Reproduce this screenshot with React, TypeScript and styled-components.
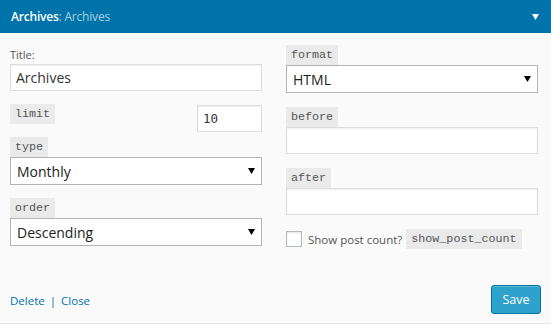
import React from "react"
import styled, { createGlobalStyle } from "styled-components"

const GlobalStyle = createGlobalStyle`
  html, body {
    margin: 0;
    padding: 0;
    background: #fff;
  }
  body {
    font-family: "Open Sans", "Liberation Sans", sans-serif;
  }
`

const Widget = styled.div`
  width: 551px;
  background: #fafafa;
  border-bottom: 2px solid #e5e5e5;
`

const Header = styled.div`
  height: 33px;
  background: #0073aa;
  padding: 0 12px 0 11px;
  display: flex;
  align-items: center;
  justify-content: space-between;
  box-sizing: border-box;
`

const HeaderTitle = styled.h3`
  margin: 0;
  font-size: 12px;
  font-weight: 600;
  color: #fff;
  letter-spacing: -0.2px;

  span {
    font-weight: 400;
    color: #a9cfe2;
  }
`

const Body = styled.div`
  padding: 0 10px;
  display: grid;
  grid-template-columns: 252px 252px;
  column-gap: 24px;
`

const Column = styled.div<{ $top: number }>`
  display: flex;
  flex-direction: column;
  padding-top: ${({ $top }) => $top}px;
`

const Field = styled.div<{ $gap?: number }>`
  display: flex;
  flex-direction: column;
  align-items: flex-start;
  margin-top: ${({ $gap = 0 }) => $gap}px;
`

const LabelText = styled.label`
  font-size: 11px;
  line-height: 18px;
  color: #555;
`

const Code = styled.code`
  font-family: "Liberation Mono", "DejaVu Sans Mono", monospace;
  font-size: 11.7px;
  line-height: 16px;
  padding: 2px 5px;
  background: #eaeaea;
  color: #555;
`

const TextInput = styled.div<{ $mono?: boolean; $width?: number }>`
  box-sizing: border-box;
  width: ${({ $width }) => ($width ? `${$width}px` : "100%")};
  height: 27px;
  border: 1px solid #ddd;
  background: #fff;
  box-shadow: inset 0 1px 2px rgba(0, 0, 0, 0.07);
  padding: 0 5px;
  display: flex;
  align-items: center;
  font-family: ${({ $mono }) =>
    $mono ? `"DejaVu Sans Mono", monospace` : `"Open Sans", sans-serif`};
  font-size: ${({ $mono }) => ($mono ? "12.5px" : "14px")};
  color: #333;
`

const Select = styled.div`
  box-sizing: border-box;
  width: 100%;
  height: 28px;
  border: 1px solid #b4b4b4;
  background: #fff;
  padding: 0 6px 0 6px;
  display: flex;
  align-items: center;
  justify-content: space-between;
  font-size: 14px;
  color: #222;
`

const LimitRow = styled.div`
  display: flex;
  justify-content: space-between;
  align-items: flex-start;
  margin-top: 13px;

  ${TextInput} {
    margin-top: 1px;
  }
`

const CheckRow = styled.div`
  display: flex;
  align-items: center;
  margin-top: 14px;
  height: 20px;
`

const Checkbox = styled.span`
  box-sizing: border-box;
  width: 16px;
  height: 16px;
  border: 1px solid #b4b9be;
  background: #fff;
  box-shadow: inset 0 1px 2px rgba(0, 0, 0, 0.1);
`

const CheckLabel = styled.span`
  font-size: 11.5px;
  color: #555;
  margin: 0 4px 0 6px;
`

const Footer = styled.div`
  display: flex;
  justify-content: space-between;
  align-items: center;
  padding: 36px 10px 9px;
`

const Links = styled.div`
  font-size: 11.5px;
  color: #0073aa;
  display: flex;
  gap: 5px;
  margin-top: 1px;
`

const Link = styled.a`
  color: #0073aa;
  text-decoration: none;
`

const SaveButton = styled.button`
  box-sizing: border-box;
  width: 50px;
  height: 29px;
  border: 1px solid #0074a2;
  border-radius: 3px;
  background: #2ea2cc;
  box-shadow: inset 0 1px 0 rgba(120, 200, 230, 0.5);
  color: #fff;
  font-family: "Open Sans", sans-serif;
  font-size: 12.5px;
  padding: 0;
`

const Arrow = ({ color = "#000" }: { color?: string }) => (
  <svg width="7" height="6" viewBox="0 0 7 6">
    <polygon points="0,0 7,0 3.5,6" fill={color} />
  </svg>
)

type SelectProps = { value: string }

const SelectBox = ({ value }: SelectProps) => (
  <Select>
    <span>{value}</span>
    <Arrow />
  </Select>
)

const App = () => (
  <>
    <GlobalStyle />
    <Widget>
      <Header>
        <HeaderTitle>
          Archives<span>: Archives</span>
        </HeaderTitle>
        <Arrow color="#fff" />
      </Header>
      <Body>
        <Column $top={13}>
          <Field>
            <LabelText>Title:</LabelText>
            <TextInput>Archives</TextInput>
          </Field>
          <LimitRow>
            <Code>limit</Code>
            <TextInput $mono $width={65}>
              10
            </TextInput>
          </LimitRow>
          <Field $gap={5}>
            <Code>type</Code>
            <SelectBox value="Monthly" />
          </Field>
          <Field $gap={13}>
            <Code>order</Code>
            <SelectBox value="Descending" />
          </Field>
        </Column>
        <Column $top={12}>
          <Field>
            <Code>format</Code>
            <SelectBox value="HTML" />
          </Field>
          <Field $gap={14}>
            <Code>before</Code>
            <TextInput />
          </Field>
          <Field $gap={14}>
            <Code>after</Code>
            <TextInput />
          </Field>
          <CheckRow>
            <Checkbox />
            <CheckLabel>Show post count?</CheckLabel>
            <Code>show_post_count</Code>
          </CheckRow>
        </Column>
      </Body>
      <Footer>
        <Links>
          <Link href="#">Delete</Link>|<Link href="#">Close</Link>
        </Links>
        <SaveButton>Save</SaveButton>
      </Footer>
    </Widget>
  </>
)

export default App
